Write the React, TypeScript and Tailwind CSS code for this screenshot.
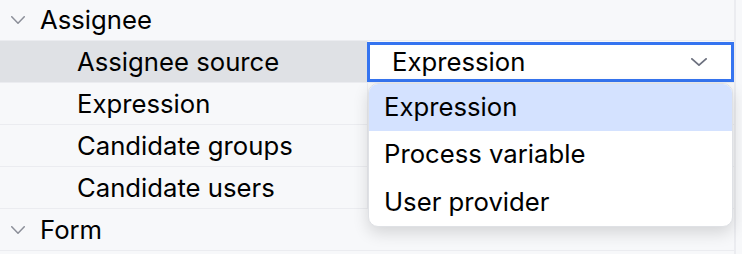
import React from "react";

const Chevron = ({ w, h, color, sw }: { w: number; h: number; color: string; sw: number }) => (
  <svg width={w} height={h} viewBox={`0 0 ${w} ${h}`} fill="none">
    <path d={`M${sw / 2} ${sw / 2} L${w / 2} ${h - sw / 2} L${w - sw / 2} ${sw / 2}`} stroke={color} strokeWidth={sw} strokeLinecap="round" strokeLinejoin="round" />
  </svg>
);

const Header = ({ label, first }: { label: string; first?: boolean }) => (
  <div className={`flex items-center border-b border-[#ebecf0] ${first ? "h-[41px]" : "h-[42px]"}`}>
    <div className="w-[40px] flex justify-center">
      <span className="ml-[-4px] flex"><Chevron w={14} h={8} color="#8c8f99" sw={1.5} /></span>
    </div>
    <span className="pt-[1px]">{label}</span>
  </div>
);

const Row = ({ label, highlight, children }: { label: string; highlight?: boolean; children?: React.ReactNode }) => (
  <div className="grid grid-cols-[368px_1fr] h-[42px] border-b border-[#ebecf0]">
    <div className={`flex items-center pl-[77px] pt-[2px] border-r border-[#ebecf0] ${highlight ? "bg-[#dfe1e5]" : ""}`}>{label}</div>
    <div className="flex items-center">{children}</div>
  </div>
);

export default function App() {
  return (
    <div className="w-[742px] h-[254px] bg-[#f7f8fa] flex overflow-hidden text-[25.7px] text-[#000] font-['Inter',sans-serif]">
      <div className="w-[734px] relative">
        <Header label="Assignee" first />
        <Row label="Assignee source" highlight>
          <div className="ml-[-1px] w-[367px] h-[40px] border-[3px] border-[#3574f0] bg-white flex items-center justify-between pl-[22px] pr-[24px]">
            <span className="pt-[2px]">Expression</span>
            <Chevron w={16} h={8} color="#6c707e" sw={1.8} />
          </div>
        </Row>
        <Row label="Expression" />
        <Row label="Candidate groups" />
        <Row label="Candidate users" />
        <Header label="Form" />
        <div className="absolute left-[368px] top-[83px] w-[365px] h-[144px] bg-white rounded-[10px] border border-[#dfe1e5] shadow-[0_6px_16px_rgba(0,0,0,0.14)] overflow-hidden flex flex-col">
          <div className="h-[47px] bg-[#d4e2ff] flex items-center pl-[15px]">Expression</div>
          <div className="h-[48px] flex items-center pl-[15px]">Process variable</div>
          <div className="h-[48px] flex items-center pl-[15px] pt-[1px]">User provider</div>
        </div>
      </div>
      <div className="w-[2px] bg-[#ebecf0]" />
    </div>
  );
}
